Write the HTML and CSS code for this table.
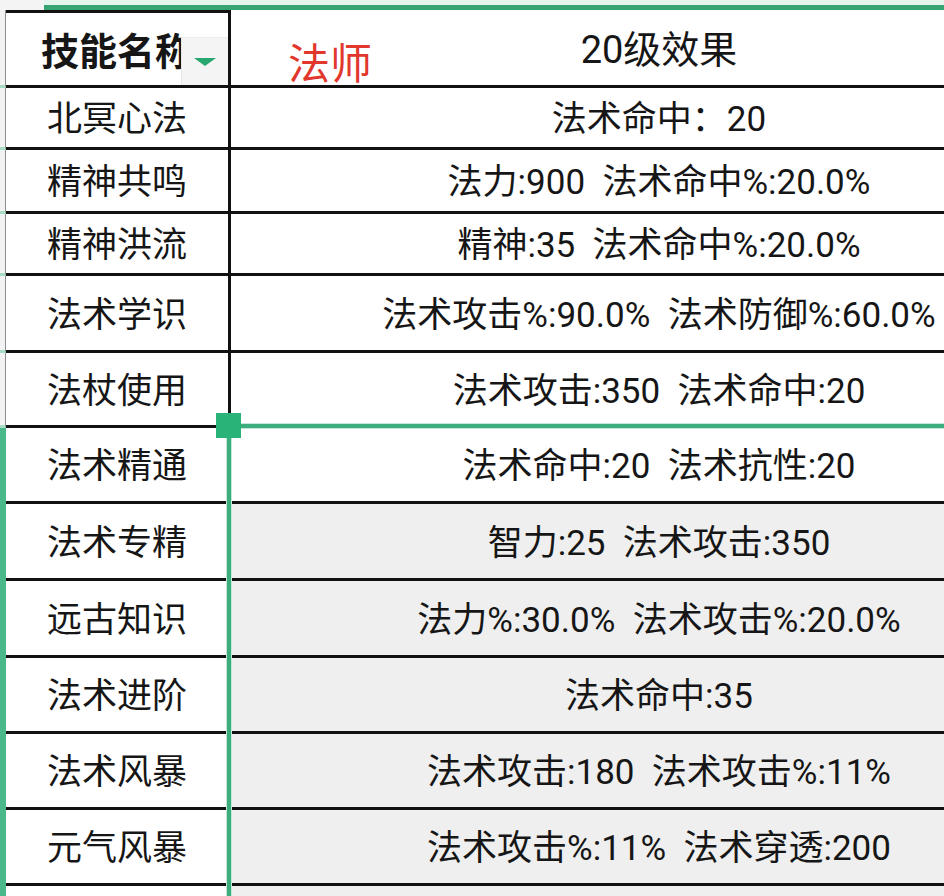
FILE: index.html
```html
<!DOCTYPE html>
<html lang="zh">
<head>
<meta charset="utf-8">
<title>技能表</title>
<link rel="stylesheet" href="styles.css">
</head>
<body>
<div class="sheet">
  <div class="colbar">
    <div class="colbar-a"></div>
    <div class="colbar-b"></div>
  </div>
  <div class="table">
    <div class="rh"></div>
    <div class="ca head first"><span class="bold">技能名称</span></div>
    <div class="cb head">20级效果</div>

    <div class="rh"></div>
    <div class="ca">北冥心法</div>
    <div class="cb">法术命中：20</div>

    <div class="rh"></div>
    <div class="ca">精神共鸣</div>
    <div class="cb">法力:900  法术命中%:20.0%</div>

    <div class="rh"></div>
    <div class="ca">精神洪流</div>
    <div class="cb">精神:35  法术命中%:20.0%</div>

    <div class="rh"></div>
    <div class="ca">法术学识</div>
    <div class="cb">法术攻击%:90.0%  法术防御%:60.0%</div>

    <div class="rh"></div>
    <div class="ca">法杖使用</div>
    <div class="cb">法术攻击:350  法术命中:20</div>

    <div class="rh on"></div>
    <div class="ca">法术精通</div>
    <div class="cb">法术命中:20  法术抗性:20</div>

    <div class="rh on"></div>
    <div class="ca">法术专精</div>
    <div class="cb sel">智力:25  法术攻击:350</div>

    <div class="rh on"></div>
    <div class="ca">远古知识</div>
    <div class="cb sel">法力%:30.0%  法术攻击%:20.0%</div>

    <div class="rh on"></div>
    <div class="ca">法术进阶</div>
    <div class="cb sel">法术命中:35</div>

    <div class="rh on"></div>
    <div class="ca">法术风暴</div>
    <div class="cb sel">法术攻击:180  法术攻击%:11%</div>

    <div class="rh on"></div>
    <div class="ca">元气风暴</div>
    <div class="cb sel">法术攻击%:11%  法术穿透:200</div>

    <div class="rh on"></div>
    <div class="ca"></div>
    <div class="cb sel"></div>
  </div>

  <div class="dropdown"><span class="tri"></span></div>
  <div class="note">法师</div>
  <div class="sel-top"></div>
  <div class="sel-left"></div>
  <div class="handle"></div>
</div>
</body>
</html>
```
FILE: styles.css
```css
* { box-sizing: border-box; }
html, body { margin: 0; padding: 0; background: #ffffff; }
body {
  font-family: Roboto, "Noto Sans CJK SC", sans-serif;
  color: #161616;
}
.sheet {
  position: relative;
  width: 944px;
  height: 896px;
  overflow: hidden;
  background: #ffffff;
}
.colbar {
  display: flex;
  height: 10px;
}
.colbar-a {
  width: 229px;
  background: #f4f4f4;
}
.colbar-b {
  flex: 0 0 900px;
  background: #e3f5ed;
  border-bottom: 5px solid #36a573;
}
.table {
  display: grid;
  grid-template-columns: 6px 225px 856px;
  grid-template-rows: 78px 62px 64px 62px 77px 75px 76px 77px 77px 76px 76px 76px 60px;
  width: 1087px;
}
.rh {
  background: #f3f3f3;
  border-right: 1px solid #8e8e8e;
  border-bottom: 3px solid #a9dcc5;
}
.rh.on {
  background: #4ab888;
  border-right: none;
  border-bottom: none;
}
.ca, .cb {
  display: flex;
  align-items: center;
  justify-content: center;
  white-space: pre;
  font-size: 35px;
  border-bottom: 3px solid #111111;
  padding-bottom: 4px;
}
.ca {
  border-right: 3px solid #111111;
}
.cb.sel {
  background: #efefef;
}
.ca.first {
  border-top: 3px solid #111111;
}
.head {
  font-size: 38px;
  padding-bottom: 2px;
}
.bold { font-weight: 700; }

.dropdown {
  position: absolute;
  left: 181px;
  top: 37px;
  width: 47px;
  height: 48px;
  background: #f4f4f4;
  border-left: 1px solid #e6e6e6;
  border-top: 1px solid #ececec;
  display: flex;
  align-items: center;
  justify-content: center;
}
.tri {
  width: 0;
  height: 0;
  border-left: 11px solid transparent;
  border-right: 11px solid transparent;
  border-top: 8px solid #27a870;
  margin-top: 1px;
}
.note {
  position: absolute;
  left: 288px;
  top: 38px;
  font-size: 42px;
  line-height: 54px;
  color: #e1372c;
}
.sel-top {
  position: absolute;
  left: 241px;
  right: 0;
  top: 424px;
  height: 4px;
  background: #3cae7d;
  box-shadow: 0 0 0 1px #c3e8d7;
}
.sel-left {
  position: absolute;
  left: 227px;
  top: 425px;
  width: 4px;
  bottom: 0;
  background: #3cae7d;
  box-shadow: 0 0 0 1px #c3e8d7;
}
.handle {
  position: absolute;
  left: 216px;
  top: 413px;
  width: 25px;
  height: 25px;
  background: #29b379;
}
```
